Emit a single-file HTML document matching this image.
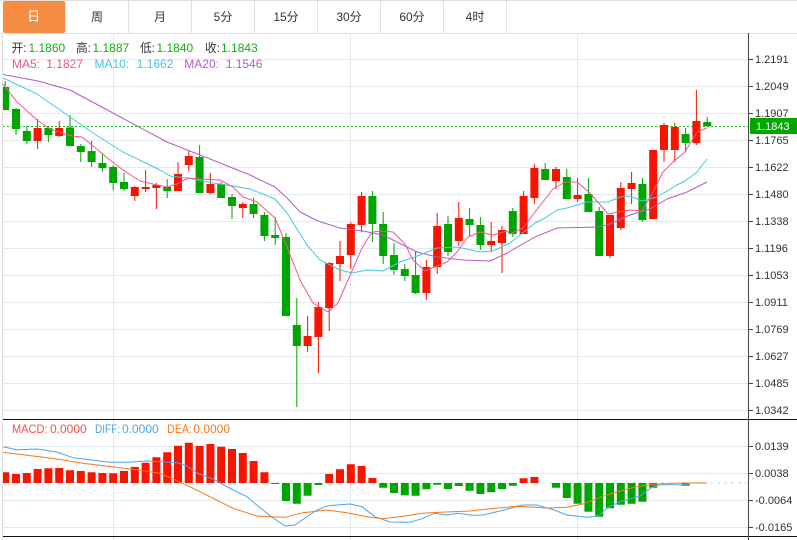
<!DOCTYPE html>
<html><head><meta charset="utf-8"><title>K线</title>
<style>
html,body{margin:0;padding:0;background:#fff;width:797px;height:540px;overflow:hidden}
svg{display:block}
text{font-family:"Liberation Sans","Noto Sans CJK SC",sans-serif;font-size:12px}
</style></head><body>
<svg width="797" height="540" viewBox="0 0 797 540" xmlns="http://www.w3.org/2000/svg">
<defs><clipPath id="c"><rect x="3" y="33" width="745" height="507"/></clipPath></defs>
<rect width="797" height="540" fill="#fff"/>
<!-- tabs -->
<path d="M0 .5H797M0 33.5H797M65.5 1V33M128.5 1V33M191.5 1V33M254.5 1V33M317.5 1V33M380.5 1V33M443.5 1V33M506.5 1V33" stroke="#e0e0e0" fill="none"/>
<rect x="3" y="1" width="62" height="32" rx="2" fill="#f58d42"/>
<g text-anchor="middle" fill="#333">
<text x="33.6" y="21" fill="#fff" style="font-size:13px">日</text>
<text x="97" y="21">周</text><text x="160" y="21">月</text><text x="223" y="21">5分</text><text x="286" y="21">15分</text><text x="349" y="21">30分</text><text x="412" y="21">60分</text><text x="475" y="21">4时</text>
</g>
<!-- grid -->
<path d="M3 59.5H748M3 86.5H748M3 113.5H748M3 140.5H748M3 167.5H748M3 194.5H748M3 221.5H748M3 248.5H748M3 275.5H748M3 302.5H748M3 329.5H748M3 356.5H748M3 383.5H748M3 410.5H748M3 446.5H748M3 473.5H748M3 500.5H748M3 527.5H748M113.5 34V540M350.5 34V540M577.5 34V540" stroke="#e3ebf1" fill="none"/>
<path d="M2.5 33V540" stroke="#ddd"/>
<path d="M3 126.5H748" stroke="#22c022" stroke-dasharray="2 2"/>
<path d="M3 483H748" stroke="#bfe6ee" stroke-width="1.2" stroke-dasharray="3 4"/>
<g clip-path="url(#c)">
<!-- green candles -->
<path stroke="#00a600" fill="none" d="M5.2 81V110M16 108V135M26.8 126V144M48.4 126V142M70 115V146M80.8 144V162M91.6 141V167M102.4 154V172M113.2 165V190M124 173V191M167.2 179V198M199.6 145V193M221.2 182V198M232 194V219M253.6 198V218M264.4 212V241M275.2 217V245M286 233V316M296.8 298V407M372.4 191V242M383.2 212V264M394 243V275M404.8 264V281M415.6 251V294M448 216V256M469.6 208V236M480.4 217V250M512.8 208V237M545.2 163V180M566.8 169V199M588.4 178V212M599.2 207V256M642.4 178V222M685.6 128V152M707.2 117V126"/>
<path fill="#00a600" d="M1.2 87h8V110h-8zM12 109h8V129h-8zM22.8 131h8V141h-8zM44.4 128h8V135h-8zM66 127.5h8V146h-8zM76.8 146h8V152h-8zM87.6 151h8V162h-8zM98.4 163h8V168h-8zM109.2 167h8V183h-8zM120 182h8V189h-8zM163.2 187h8V191h-8zM195.6 157h8V193h-8zM217.2 184h8V198h-8zM228 197h8V206h-8zM249.6 204h8V214h-8zM260.4 215h8V236h-8zM271.2 235h8V238h-8zM282 237h8V316h-8zM292.8 325h8V346h-8zM368.4 196h8V224h-8zM379.2 224h8V256h-8zM390 255h8V270h-8zM400.8 269h8V276h-8zM411.6 275h8V293h-8zM444 224h8V252h-8zM465.6 219h8V225h-8zM476.4 225h8V245h-8zM508.8 211h8V234h-8zM541.2 169h8V180h-8zM562.8 177h8V199h-8zM584.4 194h8V212h-8zM595.2 211h8V256h-8zM638.4 184h8V220h-8zM681.6 134h8V143h-8zM703.2 122h8V126h-8z"/>
<!-- red candles -->
<path stroke="#f61500" fill="none" d="M37.6 119V149M59.2 121V137M134.8 186V201M145.6 170V192M156.4 183V209M178 162V191M188.8 150V171M210.4 173V194M242.8 202V218M307.6 316V352M318.4 302V373M329.2 262V331M340 241V281M350.8 222V269M361.6 192V232M426.4 260V300M437.2 213V274M458.8 202V246M491.2 222V252M502 226V273M523.6 191V234M534.4 164V204M556 167V189M577.6 178V202M610 215V258M620.8 182V230M631.6 172V204M653.2 150V219M664 123V162M674.8 123V162M696.4 90V145"/>
<path fill="#f61500" d="M33.6 128h8V141h-8zM55.2 128h8V136h-8zM130.8 187h8V196h-8zM141.6 187h8V189h-8zM152.4 185h8V188h-8zM174 174h8V191h-8zM184.8 156h8V165h-8zM206.4 184h8V193h-8zM238.8 204h8V208h-8zM303.6 336h8V346h-8zM314.4 307h8V337h-8zM325.2 263h8V308h-8zM336 256h8V264h-8zM346.8 224h8V255h-8zM357.6 196h8V225h-8zM422.4 267h8V293h-8zM433.2 226h8V267h-8zM454.8 218h8V241h-8zM487.2 241h8V245h-8zM498 230h8V243h-8zM519.6 196h8V234h-8zM530.4 168h8V198h-8zM552 169h8V181h-8zM573.6 195h8V199h-8zM606 215h8V256h-8zM616.8 188h8V228h-8zM627.6 183h8V189h-8zM649.2 150h8V219h-8zM660 125h8V150h-8zM670.8 127h8V150h-8zM692.4 121h8V143h-8z"/>
<!-- MA lines -->
<g fill="none" stroke-width="1" stroke-linejoin="round">
<path stroke="#b45cc8" d="M3 74.5L38 81L70 90L113 113L167 142L200 155L250 175L275 187L287 198L300 212L318 221L340 228L363 231L383 235L397 242L417 252L437 257L463 260L490 261L507 253L535 237L557 228L598 227L610 224L630 215L650 209L667 199L687 192L707 182"/>
<path stroke="#45c8e2" d="M3 78L37 94L70 117L93 133L123 152L160 170L170 176L187 178L213 183L233 186L250 189L275 199L287 213L307 245L320 260L340 270L352 273L367 270L383 271L400 262L420 255L437 248L457 247L480 252L493 251L510 243L520 235L535 223L545 218L557 210L567 208L587 202L608 202L620 197L630 196L642 201L657 197L677 185L685 181L697 172L707 159"/>
<path stroke="#f0588c" d="M3 84L17 102L37 120L50 129L72 136L82 137L93 146L110 160L123 170L140 181L157 185L167 187L177 184L188 178L200 179L220 180L233 187L243 197L257 202L275 218L287 247L300 280L313 303L328 312L338 303L348 280L362 248L372 232L382 231L393 232L405 244L413 260L425 271L447 262L457 252L468 237L480 232L493 235L507 231L510 234L523 228L535 212L553 189L565 182L577 182L590 193L608 214L630 210L642 211L653 192L663 172L673 162L685 152L697 132L707 128"/>
</g>
<!-- MACD bars -->
<path fill="#f61500" d="M1.2 472.3h8V483h-8zM12 474h8V483h-8zM22.8 473h8V483h-8zM33.6 469h8V483h-8zM44.4 468.3h8V483h-8zM55.2 468h8V483h-8zM66 470.3h8V483h-8zM76.8 471h8V483h-8zM87.6 472.3h8V483h-8zM98.4 473h8V483h-8zM109.2 473.3h8V483h-8zM120 471h8V483h-8zM130.8 467h8V483h-8zM141.6 462.7h8V483h-8zM152.4 457.3h8V483h-8zM163.2 452.3h8V483h-8zM174 445.7h8V483h-8zM184.8 442.7h8V483h-8zM195.6 446h8V483h-8zM206.4 444h8V483h-8zM217.2 446.7h8V483h-8zM228 449h8V483h-8zM238.8 453h8V483h-8zM249.6 461h8V483h-8zM260.4 472.3h8V483h-8zM325.2 474h8V483h-8zM336 469.3h8V483h-8zM346.8 464.3h8V483h-8zM357.6 466h8V483h-8zM368.4 478h8V483h-8zM519.6 478.3h8V483h-8zM530.4 477h8V483h-8z"/>
<path fill="#00a600" d="M271.2 483h8V484h-8zM282 483h8V501h-8zM292.8 483h8V503.7h-8zM303.6 483h8V495.7h-8zM314.4 483h8V485h-8zM379.2 483h8V487.7h-8zM390 483h8V493h-8zM400.8 483h8V495.3h-8zM411.6 483h8V495.7h-8zM422.4 483h8V489.3h-8zM433.2 483h8V484.7h-8zM444 483h8V489h-8zM454.8 483h8V486h-8zM465.6 483h8V490.7h-8zM476.4 483h8V494h-8zM487.2 483h8V492.3h-8zM498 483h8V489h-8zM508.8 483h8V485.7h-8zM552 483h8V487.7h-8zM562.8 483h8V498h-8zM573.6 483h8V503.7h-8zM584.4 483h8V511.7h-8zM595.2 483h8V516.7h-8zM606 483h8V508.3h-8zM616.8 483h8V504.7h-8zM627.6 483h8V503.7h-8zM638.4 483h8V501.7h-8zM649.2 483h8V487.7h-8zM681.6 483h8V485.7h-8z"/>
<g fill="none" stroke-linejoin="round">
<path stroke="#4da6f0" d="M3 446.7L17 449.7L37 449L57 452L73 457.7L110 462.3L127 462.3L147 461L177 462.7L187 466L197 473L213 479L233 490L247 496.7L260 507.7L270 515.7L285 526L295 525L305 518L317 510L328 505.7L350 504L362 506.7L375 516.7L390 522L410 522.3L420 519.3L435 513.3L447 515L458 513.3L472 515.3L483 515L500 511L522 505L537 505L554 510L567 515L587 517.3L599 515.7L607 508L620 501.7L640 496L652 487.3L660 484.7L687 484.7L690 483L707 483"/>
<path stroke="#f57a1c" d="M3 452.3L27 455.3L57 459L83 463.3L133 469.3L160 473.3L177 480.7L200 491.7L233 508.3L257 516L270 516.7L285 517.3L303 512.7L327 510L347 512.7L367 516.7L382 518.7L400 516.7L423 513.3L440 512.3L470 511L490 508.7L517 506.3L530 507L547 508L567 507.3L584 503.7L602 496.7L620 491L640 486L657 484L680 483L707 483"/>
</g>
</g>
<!-- frames and axis -->
<path d="M3 419.5H797M3 536.5H797" stroke="#111"/>
<path d="M748.5 33V540" stroke="#444"/>
<path d="M749 59.5h4M749 86.5h4M749 113.5h4M749 140.5h4M749 167.5h4M749 194.5h4M749 221.5h4M749 248.5h4M749 275.5h4M749 302.5h4M749 329.5h4M749 356.5h4M749 383.5h4M749 410.5h4M749 446.5h4M749 473.5h4M749 500.5h4M749 527.5h4" stroke="#444"/>
<rect x="750" y="118" width="47" height="16" fill="#00a600"/>
<g fill="#333">
<text x="755" y="63" style="font-size:11px">1.2191</text><text x="755" y="90" style="font-size:11px">1.2049</text><text x="755" y="117" style="font-size:11px">1.1907</text><text x="755" y="144" style="font-size:11px">1.1765</text><text x="755" y="171" style="font-size:11px">1.1622</text><text x="755" y="198" style="font-size:11px">1.1480</text><text x="755" y="225" style="font-size:11px">1.1338</text><text x="755" y="252" style="font-size:11px">1.1196</text><text x="755" y="279" style="font-size:11px">1.1053</text><text x="755" y="306" style="font-size:11px">1.0911</text><text x="755" y="333" style="font-size:11px">1.0769</text><text x="755" y="360" style="font-size:11px">1.0627</text><text x="755" y="387" style="font-size:11px">1.0485</text><text x="755" y="414" style="font-size:11px">1.0342</text>
<text x="755" y="450" style="font-size:11px">0.0139</text><text x="755" y="477" style="font-size:11px">0.0038</text><text x="755" y="504" style="font-size:11px">-0.0064</text><text x="755" y="531" style="font-size:11px">-0.0165</text>
</g>
<text x="756" y="130" fill="#fff" style="font-size:11px">1.1843</text>
<!-- legends -->
<g fill="#333"><text x="11.5" y="52" textLength="15" lengthAdjust="spacingAndGlyphs">开:</text><text x="76" y="52" textLength="15" lengthAdjust="spacingAndGlyphs">高:</text><text x="140" y="52" textLength="15" lengthAdjust="spacingAndGlyphs">低:</text><text x="205" y="52" textLength="15" lengthAdjust="spacingAndGlyphs">收:</text></g>
<g fill="#1aa81a"><text x="28.5" y="52">1.1860</text><text x="92.5" y="52">1.1887</text><text x="156.5" y="52">1.1840</text><text x="221" y="52">1.1843</text></g>
<g fill="#f0588c"><text x="12" y="68">MA5:</text><text x="46.3" y="68">1.1827</text></g>
<g fill="#45c8e2"><text x="94.5" y="68">MA10:</text><text x="136.7" y="68">1.1662</text></g>
<g fill="#b45cc8"><text x="184.3" y="68">MA20:</text><text x="225.7" y="68">1.1546</text></g>
<g fill="#f4504a"><text x="12" y="433" textLength="35.5" lengthAdjust="spacingAndGlyphs">MACD:</text><text x="50" y="433">0.0000</text></g>
<g fill="#4da6f0"><text x="95" y="433" textLength="25" lengthAdjust="spacingAndGlyphs">DIFF:</text><text x="122" y="433">0.0000</text></g>
<g fill="#f57a1c"><text x="167.3" y="433" textLength="24.5" lengthAdjust="spacingAndGlyphs">DEA:</text><text x="193.3" y="433">0.0000</text></g>
</svg>
</body></html>
